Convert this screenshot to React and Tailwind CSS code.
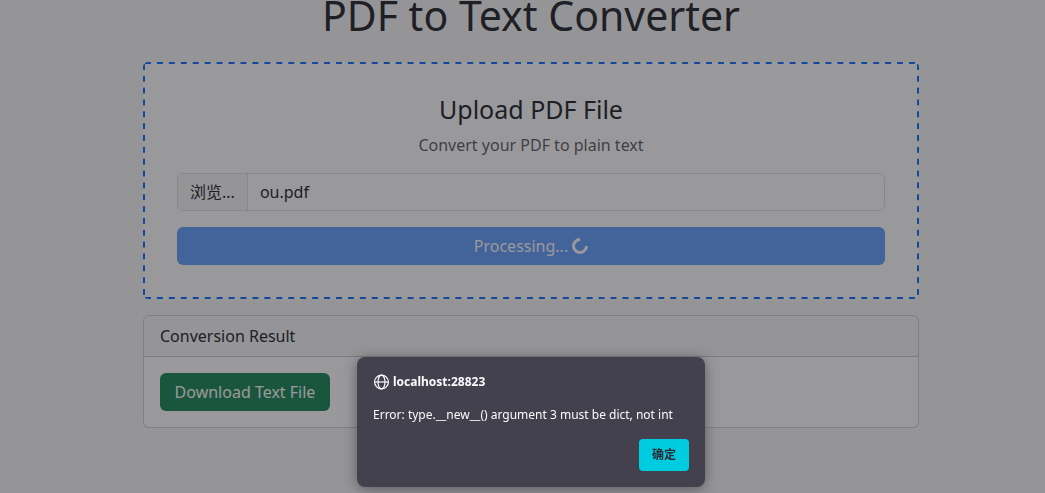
import React from 'react';

function GlobeIcon() {
  return (
    <svg className="size-4 shrink-0" viewBox="0 0 16 16" fill="none" stroke="currentColor" strokeWidth="1.2" aria-hidden="true">
      <circle cx="8.5" cy="8" r="6.9" />
      <ellipse cx="8.5" cy="8" rx="3.5" ry="6.9" />
      <path d="M1.6 8h13.8" />
    </svg>
  );
}

// the four background layers draw the dashed outline, with whole dashes on each side
function UploadArea() {
  return (
    <section className="rounded-[5px] border-2 border-transparent bg-white bg-origin-border p-8 text-center [background-image:linear-gradient(90deg,transparent_2px,#0d6efd_2px,#0d6efd_8px,transparent_8px),linear-gradient(90deg,transparent_2px,#0d6efd_2px,#0d6efd_8px,transparent_8px),linear-gradient(180deg,transparent_2px,#0d6efd_2px,#0d6efd_8px,transparent_8px),linear-gradient(180deg,transparent_2px,#0d6efd_2px,#0d6efd_8px,transparent_8px)] [background-position:left_top,left_bottom,left_top,right_top] [background-repeat:round_no-repeat,round_no-repeat,no-repeat_round,no-repeat_round] [background-size:12px_2px,12px_2px,2px_12px,2px_12px]">
      <h2 className="mb-2.5 text-[25px] leading-[27px]">Upload PDF File</h2>
      <p className="mb-4 text-[#212529]/75">Convert your PDF to plain text</p>
      <div className="mb-4 flex h-[38px] overflow-hidden rounded-md border border-[#dee2e6] bg-white">
        <button type="button" className="border-r border-[#dee2e6] bg-[#f8f9fa] px-3">浏览...</button>
        <input type="text" readOnly value="ou.pdf" aria-label="PDF file" className="min-w-0 flex-1 px-3" />
      </div>
      <button type="button" disabled className="flex h-[38px] w-full items-center justify-center gap-1 rounded-md bg-[#0d6efd] text-white opacity-65">
        Processing...
        <span className="size-4 -rotate-45 rounded-full border-3 border-white border-r-transparent" />
      </button>
    </section>
  );
}

function ResultCard() {
  return (
    <section className="mt-4 overflow-hidden rounded-md border border-black/18 bg-white">
      <div className="border-b border-black/18 bg-black/3 px-4 py-2">Conversion Result</div>
      <div className="p-4">
        <button type="button" className="h-[38px] w-[170px] rounded-md bg-[#198754] text-white">Download Text File</button>
      </div>
    </section>
  );
}

function AlertDialog() {
  return (
    <div className="fixed inset-0 flex items-end justify-center bg-[#1c1b22]/45 pb-1.5 pl-[17px]">
      <div
        role="alertdialog"
        aria-labelledby="alert-title"
        aria-describedby="alert-message"
        className="w-[348px] rounded-lg bg-[#42414d] px-4 pt-[17px] pb-4 text-xs leading-4 text-[#fbfbfe] shadow-[0_2px_14px_rgba(0,0,0,0.4)]"
      >
        <div className="flex items-center gap-1">
          <GlobeIcon />
          <h2 id="alert-title" className="font-bold">localhost:28823</h2>
        </div>
        <p id="alert-message" className="mt-[17px] whitespace-nowrap">Error: type.__new__() argument 3 must be dict, not int</p>
        <div className="mt-4 flex justify-end">
          <button type="button" className="h-8 w-[50px] rounded-sm bg-[#00ccdf] font-bold text-[#2b2a33]">确定</button>
        </div>
      </div>
    </div>
  );
}

export default function App() {
  return (
    <div className="min-h-screen overflow-hidden bg-[#f8f9fa] pl-[17px] font-['Noto_Sans','Noto_Sans_CJK_SC',sans-serif] text-base text-[#212529]">
      <main className="mx-auto -mt-2.5 max-w-[776px] pb-12">
        <h1 className="mb-[22px] text-center text-[41px] leading-[50px]">PDF to Text Converter</h1>
        <UploadArea />
        <ResultCard />
      </main>
      <AlertDialog />
    </div>
  );
}
